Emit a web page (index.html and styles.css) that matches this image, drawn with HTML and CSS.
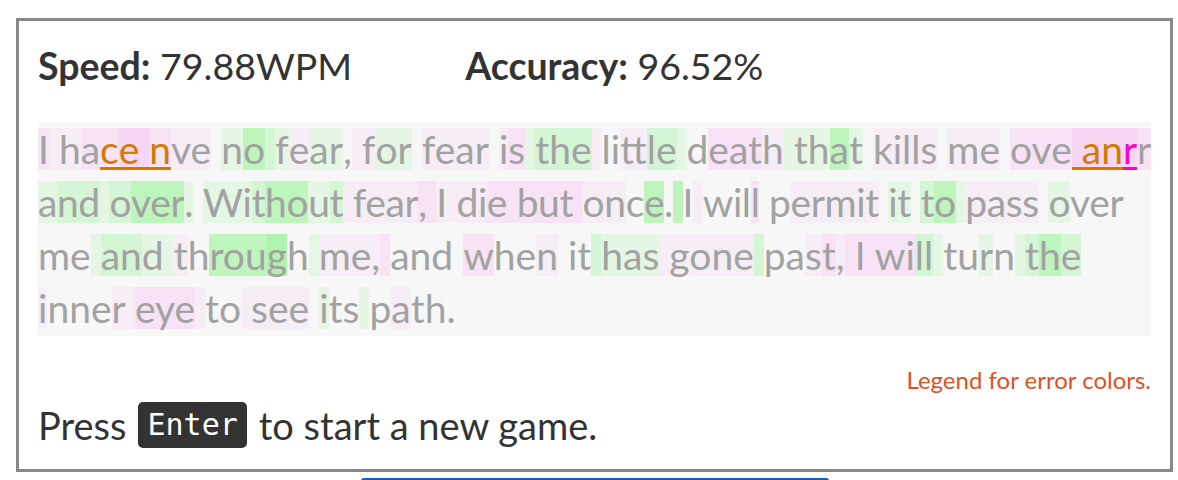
FILE: index.html
```html
<!DOCTYPE html>
<html lang="en">
<head>
<meta charset="utf-8">
<title>Typing result</title>
<link rel="stylesheet" href="styles.css">
</head>
<body>
<div class="page">
  <div class="box">
    <div class="stats">
      <div class="stat"><b>Speed:</b> 79.88WPM</div>
      <div class="stat"><b>Accuracy:</b> 96.52%</div>
    </div>
    <div class="typed">
      <div class="line"><span class="p2">I</span><span class="p1"> h</span><span class="p2">a</span><span class="p2 err">c</span><span class="p3 err">e </span><span class="p2 err">n</span><span class="p1">ve</span><span> </span><span class="g1">n</span><span class="g3">o</span><span class="g2"> </span><span class="g1">f</span><span class="p1">e</span><span class="g1">ar</span><span>,</span><span class="p1"> f</span><span class="g1">or</span><span> </span><span class="p1">fear</span><span> </span><span class="p1">i</span><span class="p2">s</span><span class="g1"> </span><span class="g2">the</span><span class="p1"> </span><span>li</span><span class="p1">tt</span><span class="g2">le</span><span class="g1"> </span><span>d</span><span class="p2">eat</span><span class="p1">h</span><span class="g1"> th</span><span class="g3">a</span><span class="g1">t</span><span> </span><span class="p1">kills</span><span> </span><span class="p1">me</span><span> </span><span class="p2">ove</span><span class="p3 err"> an</span><span class="p3 err2">r</span><span class="p2">r</span></div>
      <div class="line tight"><span class="g1">a</span><span class="g2">nd</span><span class="g1"> </span><span class="g2">o</span><span class="g3">ver</span><span class="g1">.</span><span> </span><span class="g1">Wi</span><span class="g2">t</span><span class="g3">ho</span><span class="g1">u</span><span class="g2">t</span><span class="p1"> fear</span><span class="p2">, </span><span class="p1">I di</span><span class="p2">e but </span><span class="p1">on</span><span>c</span><span class="g3">e</span><span>.</span><span class="g3"> </span><span>I</span><span class="p1"> </span><span>wil</span><span class="p2">l</span><span> p</span><span class="p1">ermit</span><span> </span><span class="g1">it</span><span> </span><span class="g2">t</span><span class="g3">o</span><span class="g1"> </span><span class="p1">pass</span><span> </span><span class="g1">o</span><span>ver</span></div>
      <div class="line"><span>me</span><span class="g1"> </span><span class="g2">an</span><span class="g1">d </span><span class="p1">t</span><span>h</span><span class="g3">rou</span><span class="g4">g</span><span>h</span><span class="g1"> </span><span class="p1">me,</span><span class="p2"> </span><span>and </span><span class="p2">w</span><span>he</span><span class="p1">n</span><span> it</span><span class="g2"> </span><span class="g1">has</span><span class="p1"> gone</span><span class="g2"> </span><span>pa</span><span class="p1">s</span><span class="p2">t</span><span class="p1">,</span><span class="p2"> I wi</span><span class="g2">ll</span><span class="g1"> </span><span>tu</span><span class="g1">r</span><span>n</span><span class="g1"> </span><span class="g2">t</span><span class="g3">h</span><span class="g2">e</span></div>
      <div class="line"><span class="p1">i</span><span>nne</span><span class="p1">r </span><span class="p2">eye</span><span class="p1"> </span><span>to</span><span class="p1"> see</span><span> </span><span class="g1">i</span><span>ts</span><span class="g1"> </span><span>p</span><span class="p1">a</span><span>th.</span></div>
    </div>
    <div class="legend">Legend for error colors.</div>
    <div class="press"><span>Press</span><kbd class="key">Enter</kbd><span>to start a new game.</span></div>
  </div>
  <div class="next-btn"></div>
</div>
</body>
</html>
```

FILE: styles.css
```css
body {
  margin: 0;
  background: #ffffff;
  font-family: Lato, "Open Sans", sans-serif;
  overflow: hidden;
}

.page {
  padding: 18px 5px 0 16px;
}

.box {
  border: 3px solid #888888;
  padding: 21px 19px 21px 19px;
}

.stats {
  display: flex;
  gap: 113px;
  font-size: 37.5px;
  line-height: 48px;
  color: #333333;
}

.stats b {
  font-weight: 700;
}

.typed {
  margin-top: 32px;
  background: #f7f7f7;
  padding: 6px 0 7px;
  display: flex;
  flex-direction: column;
  gap: 11px;
  font-size: 39px;
  color: #a2a2a2;
}

.line {
  display: flex;
  height: 42px;
  line-height: 42px;
}

.line.tight {
  letter-spacing: -0.4px;
}

.line span {
  white-space: pre;
  height: 42px;
}

.p1 { background: #f7edf6; }
.p2 { background: #f7e3f5; }
.p3 { background: #f7d6f4; }
.g1 { background: #e5f6e5; }
.g2 { background: #d4f6d4; }
.g3 { background: #bdf5bd; }
.g4 { background: #aef4ae; }

.err {
  color: #d27b00;
  box-shadow: inset 0 -3px 0 #d27b00;
}

.err2 {
  color: #ff00c8;
  box-shadow: inset 0 -3px 0 #ff00c8;
}

.legend {
  margin-top: 29px;
  text-align: right;
  font-size: 24px;
  line-height: 29px;
  color: #e2501f;
}

.press {
  margin-top: 8px;
  display: flex;
  align-items: center;
  gap: 12px;
  font-size: 38px;
  line-height: 46px;
  color: #333333;
}

.key {
  display: block;
  background: #333333;
  color: #ffffff;
  border-radius: 5px;
  font-family: "DejaVu Sans Mono", monospace;
  font-size: 30px;
  height: 46px;
  line-height: 46px;
  padding: 0 9px;
}

.next-btn {
  width: 468px;
  height: 3px;
  margin: 6px auto 0;
  background: #0b5ed7;
  border-radius: 6px 6px 0 0;
}
```
